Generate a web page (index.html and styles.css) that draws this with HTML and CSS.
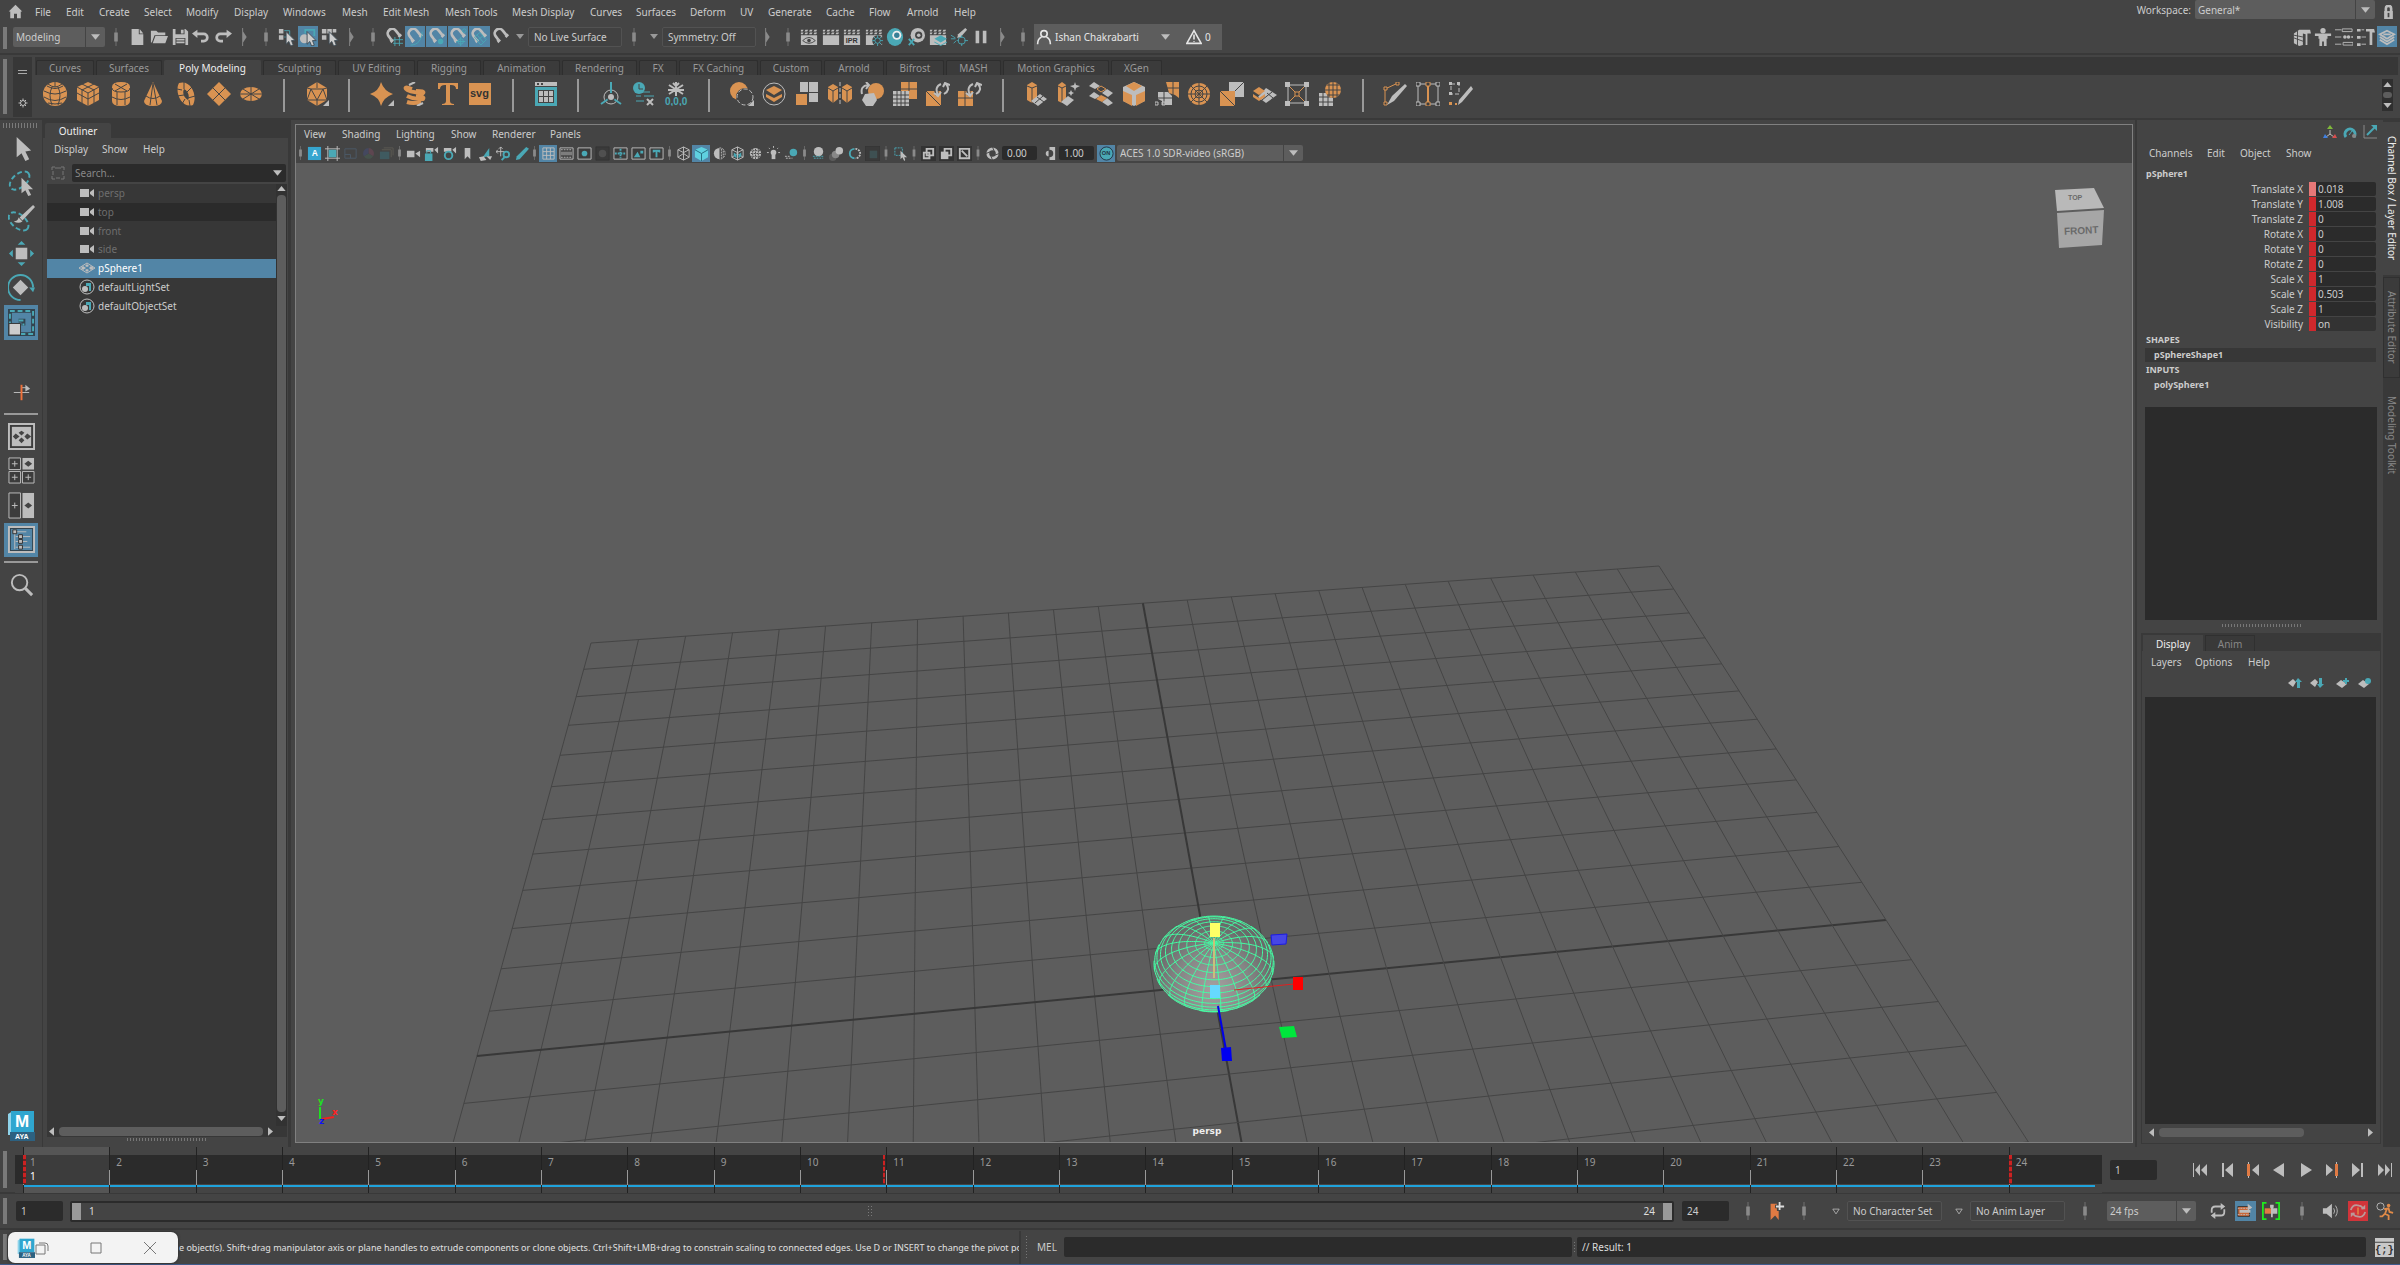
FILE: index.html
```html
<!DOCTYPE html>
<html lang="en">
<head>
<meta charset="utf-8">
<title>Maya</title>
<link rel="stylesheet" href="styles.css">
</head>
<body>
<svg class="sprite" aria-hidden="true">
<symbol id="home" viewBox="0 0 20 20"><path class="g" d="M10 1 1 10h2v9h5v-6h4v6h5v-9h2z"/></symbol>
<symbol id="down" viewBox="0 0 10 6"><path class="g" d="M0 0h10L5 6z"/></symbol>
<symbol id="downo" viewBox="0 0 10 8"><path class="s" d="M1 1h8L5 7z"/></symbol>
<symbol id="sep" viewBox="0 0 10 20"><path class="s m" d="M5 0v20"/><path class="m2" d="M3 5h4v10H3z"/></symbol>
<symbol id="grp" viewBox="0 0 10 20"><path class="m2" d="M3 0h1v4l4 6-4 6v4H3z"/></symbol>
<symbol id="file" viewBox="0 0 20 20"><path class="g" d="M4 1h8v6h5v12H4zM13 1l4 5h-4z"/></symbol>
<symbol id="open" viewBox="0 0 20 20"><path class="g" d="M1 3h6l2 2h8v3H5l-3 8H1zM6 9h14l-3 8H3z"/></symbol>
<symbol id="save" viewBox="0 0 20 20"><path class="g" d="M2 1h14l3 3v15H2z"/><path class="dk" d="M5 1h10v6H5zM5 11h11v8H5z"/><path class="g" d="M11 2h3v4h-3zM6 12h9v2H6zM6 15h9v2H6z"/></symbol>
<symbol id="undo" viewBox="0 0 20 20"><path class="g" d="M6 2v3h7a5 5 0 0 1 0 11h-3v-3h3a2 2 0 0 0 0-5H6v3L0 6z"/></symbol>
<symbol id="redo" viewBox="0 0 20 20"><path class="g" d="M14 2v3H7a5 5 0 0 0 0 11h3v-3H7a2 2 0 0 1 0-5h7v3l6-5z"/></symbol>
<symbol id="ptr" viewBox="0 0 20 20"><path fill="#ccc" stroke="#3c4a52" d="M9 4v14l3-3 2 5 3-1-2-5h4z"/></symbol>
<symbol id="selh" viewBox="0 0 20 20"><path class="g" d="M1 1h5v5H1zM1 8h5v5H1z"/><path class="st" d="M7 3h6v9M7 10h4"/><use href="#ptr"/></symbol>
<symbol id="selo" viewBox="0 0 20 20"><circle class="g" cx="6" cy="12" r="5"/><path class="st w2" d="M7 6V2h10v7"/><use href="#ptr"/></symbol>
<symbol id="selc" viewBox="0 0 20 20"><path class="g" d="M1 1h5v5H1zM7 1h5v5H7zM1 8h5v5H1zM13 1h4v4h-4z"/><use href="#ptr"/></symbol>
<symbol id="mag" viewBox="0 0 20 20"><path class="gm" d="M7 13 4 9a5 5 0 0 1 8-6l4 5"/><path class="g" d="m5 14 3-2 2 2-3 3zM14 9l3-3 2 2-3 3z"/></symbol>
<symbol id="maggrid" viewBox="0 0 20 20"><use href="#mag"/><path class="st" d="M11 10v10M16 10v10M9 13h11M9 17h11"/></symbol>
<symbol id="magcrv" viewBox="0 0 20 20"><use href="#mag"/><path class="st" d="M5 19c8 0 13-6 13-15"/></symbol>
<symbol id="magpt" viewBox="0 0 20 20"><use href="#mag"/><circle class="t" cx="14" cy="15" r="3"/></symbol>
<symbol id="magprj" viewBox="0 0 20 20"><use href="#mag"/><circle class="st" cx="13" cy="15" r="3"/><circle class="st" cx="17" cy="3" r="2"/><path class="st" d="M13 10v10M8 15h10"/></symbol>
<symbol id="magpln" viewBox="0 0 20 20"><use href="#mag"/><path class="st" d="m5 10 6-5 7 8-6 6zM8 14l6-5M8 8l7 8"/></symbol>
<symbol id="clap" viewBox="0 0 20 20"><path class="g" d="M1 2h3L3 4H1zM6 2h3L8 4H5zM11 2h3l-1 2h-3zM16 2h3l-1 2h-3zM1 5h3L3 7H1zM6 5h3L8 7H5zM11 5h3l-1 2h-3zM16 5h3l-1 2h-3zM1 8h18v11H1z"/></symbol>
<symbol id="clapeye" viewBox="0 0 20 20"><use href="#clap"/><path class="ds" d="M3 14q7-7 14 0q-7 6-14 0z"/><circle class="dk" cx="10" cy="14" r="2"/></symbol>
<symbol id="clapipr" viewBox="0 0 20 20"><use href="#clap"/><text class="ipr" x="3" y="17">IPR</text></symbol>
<symbol id="cog" viewBox="0 0 20 20"><circle class="s2" cx="10" cy="10" r="5"/><path class="s2" d="M10 1v4M10 15v4M1 10h4M15 10h4M4 4l3 3M13 13l3 3M16 4l-3 3M7 13l-3 3"/></symbol>
<symbol id="clapcog" viewBox="0 0 20 20"><use href="#clap"/><circle class="dk" cx="14" cy="14" r="6"/><circle class="st" cx="14" cy="14" r="3"/><path class="st" d="M14 8v3M14 17v3M8 14h3M17 14h3M10 10l2 2M16 16l2 2M18 10l-2 2M12 16l-2 2"/></symbol>
<symbol id="eye" viewBox="0 0 20 20"><ellipse class="t" cx="10" cy="10" rx="9" ry="10"/><circle cx="12" cy="8" r="5" fill="#eee"/><circle cx="12" cy="8" r="3" fill="#387f96"/></symbol>
<symbol id="eyex" viewBox="0 0 20 20"><circle class="g" cx="12" cy="8" r="8"/><circle class="dk" cx="13" cy="8" r="4"/><circle class="g" cx="13" cy="8" r="2"/><path class="st w2" d="m2 12 6 7M8 12l-6 7"/></symbol>
<symbol id="claplay" viewBox="0 0 20 20"><use href="#clap"/><path class="t" d="m13 8 7 4-7 4-7-4zM6 15l7 4 7-4v1l-7 4-7-4z"/></symbol>
<symbol id="light" viewBox="0 0 20 20"><path class="g" d="m17 0 2 2-7 8-4 1 1-4z"/><path class="st" d="M1 8l5 3M4 17l3-3M1 12h5"/><circle class="st" cx="13" cy="14" r="4"/><path class="st" d="M13 8v3M13 17v3M8 14h2M16 14h4"/></symbol>
<symbol id="pause" viewBox="0 0 20 20"><path class="g" d="M4 3h4v14H4zM12 3h4v14h-4z"/></symbol>
<symbol id="user" viewBox="0 0 20 20"><circle class="sw" cx="10" cy="6" r="4"/><path class="sw" d="M2 19q0-7 5-9M18 19q0-7-5-9"/></symbol>
<symbol id="warn" viewBox="0 0 20 20"><path class="sw" d="M10 2 1 18h18zM10 7v6M10 15v1"/></symbol>
<symbol id="psphere" viewBox="0 0 24 24"><circle class="o" cx="12" cy="12" r="12"/><path class="ds" d="M1 9q11 6 22 0M1 15q11 7 22 0M4 4q8 5 16 0M5 21q7 2 14 0M12 0v5M9 5q-4 8 0 18M15 5q4 8 0 18M5 2q4 3 7 3t7-3"/></symbol>
<symbol id="pcube" viewBox="0 0 24 24"><path class="o" d="m12 0 11 5v13l-11 6-11-6V5z"/><path class="ds" d="m1 5 11 6 11-6M12 11v13M6 2l12 6v13M18 2 6 8v13M1 11l11 6 11-6"/></symbol>
<symbol id="pcyl" viewBox="0 0 24 24"><path class="o" d="M3 5q0-5 9-5t9 5v14q0 5-9 5t-9-5z"/><path class="ds" d="M3 6q0 4 9 4t9-4M3 15q9 5 18 0M8 10v13M16 10v13M6 2l12 7M18 2 6 9"/></symbol>
<symbol id="pcone" viewBox="0 0 24 24"><path class="o" d="m12 0 9 19q0 5-9 5t-9-5z"/><path class="ds" d="M5 14q7 5 14 0M12 1 9 23M12 1l4 22"/></symbol>
<symbol id="ptorus" viewBox="0 0 24 24"><path class="o" fill-rule="evenodd" d="M5 1C17-3 24 14 19 23 8 27 0 10 5 1zM10 7c-2 4 0 9 4 11 2-4 0-9-4-11z"/><path class="ds" d="m3 7 5 1M3 14l7-1M10 0v7M18 5l-5 5M21 14l-7 2M8 22l3-5M15 18l1 6"/></symbol>
<symbol id="pplane" viewBox="0 0 24 24"><path class="o" d="m12 0 12 12-12 12L0 12z"/><path class="ds" d="M6 6l12 12M18 6 6 18"/></symbol>
<symbol id="pdisc" viewBox="0 0 24 24"><ellipse class="o" cx="12" cy="12" rx="11" ry="7"/><path class="ds" d="M1 12h22M12 5v14M4 7l16 10M20 7 4 17"/></symbol>
<symbol id="corner" viewBox="0 0 24 24"><path class="g" d="M24 18v6h-6z"/></symbol>
<symbol id="plat" viewBox="0 0 24 24"><path class="o" d="m12 0 10 6v12l-10 6-10-6V6z"/><path class="ds" d="M12 0v6M6 7h12l-6 11zM2 6l4 1-4 11 10 0v6M22 6l-4 1 4 11H12"/><use href="#corner"/></symbol>
<symbol id="pstar" viewBox="0 0 24 24"><path class="o" d="M11 0q3 9 12 12-9 3-12 12Q9 15 0 12 9 9 11 0z"/><use href="#corner"/></symbol>
<symbol id="pheli" viewBox="0 0 24 24"><path class="so w4" d="M9 7Q1 4 3 7t17 4q2-2-7-2M4 14q8 4 16 3 2-3-7-3M4 20q6 2 14 0"/><path class="s w2" d="m6 3 6-3M14 24l6-3"/></symbol>
<symbol id="ptext" viewBox="0 0 24 24"><path class="o" d="M2 1h20v6h-2q0-4-5-4h-1v16q0 3 4 3v1H6v-1q4 0 4-3V3H9Q4 3 4 7H2z"/></symbol>
<symbol id="psvg" viewBox="0 0 24 24"><path class="o" d="M1 1h22v22H1z"/><text class="svgt" x="2" y="15">svg</text></symbol>
<symbol id="content" viewBox="0 0 24 24"><path class="g" d="M1 0h22v4H1z"/><path class="t" d="M1 5h22v19H1z"/><path class="dk" d="M3 1h2v2H3zM7 1h2v2H7zM4 8h16v13H4z"/><path class="g" d="M5 9h4v5H5zM10 9h4v5h-4zM15 9h4v5h-4zM5 15h4v5H5zM10 15h4v5h-4zM15 15h4v5h-4z"/></symbol>
<symbol id="pivot" viewBox="0 0 24 24"><circle class="s" cx="12" cy="15" r="7"/><path class="st w2" d="M12 0v12M12 15l-10 7M12 15l10 7"/><circle class="dk" cx="12" cy="15" r="4"/><circle class="g" cx="12" cy="15" r="3"/></symbol>
<symbol id="hist" viewBox="0 0 24 24"><circle class="t" cx="7" cy="6" r="6"/><path class="ds" d="M7 2v5h4"/><path class="st" d="M12 14h10M4 19h8M9 10h9M4 14h5"/><path class="s w2" d="m15 17 6 6M21 17l-6 6"/></symbol>
<symbol id="freeze" viewBox="0 0 24 24"><path class="s w2" d="M12 0v14M5 3l14 9M19 3 5 12M9 1l3 3 3-3M4 8h16"/><text class="zero" x="1" y="23">0,0,0</text></symbol>
<symbol id="comb" viewBox="0 0 24 24"><circle class="o" cx="9" cy="9" r="9"/><circle class="dk" cx="15" cy="15" r="9"/><circle class="s dash" cx="15" cy="15" r="8"/><use href="#corner"/></symbol>
<symbol id="sepr" viewBox="0 0 24 24"><circle class="s" cx="12" cy="12" r="11"/><path class="o" d="m12 4 8 4-8 5-8-5zM4 12l8 4 8-4v3l-8 5-8-5z"/></symbol>
<symbol id="extr" viewBox="0 0 24 24"><path class="g" d="M5 0h8v10H5zM14 0h9v10h-9zM14 11h9v9h-9z"/><path class="o" d="M1 12h11v11H1z"/></symbol>
<symbol id="mirr" viewBox="0 0 24 24"><path class="o" d="m5 2 5 3v12l-5 4-5-4V5zM19 2l5 3v12l-5 4-5-4V5z"/><path class="s dash" d="M12 0v24"/><path class="ds" d="m0 6 5 3 5-3M5 9v12M14 6l5 3 5-3M19 9v12"/></symbol>
<symbol id="smth" viewBox="0 0 24 24"><circle class="o" cx="16" cy="9" r="8"/><path class="g" d="m5 12 9-1 3 7-4 6H6l-4-6z"/><path class="s w2" d="M2 12Q0 4 8 3M6 0l3 3-3 4"/></symbol>
<symbol id="remesh" viewBox="0 0 24 24"><path class="o" d="M8 0h16v17H8z"/><path class="g" d="M0 9h16v15H0z"/><path class="ds" d="M0 13h16M0 17h16M0 21h16M4 9v15M8 9v15M12 9v15M16 0v9M8 7h16"/></symbol>
<symbol id="retr" viewBox="0 0 24 24"><path class="o" d="M0 9h15v15H0z"/><path class="ds" d="m0 9 15 15"/><path class="dkw" d="M14 4q-5 2-3 9M20 2q5 5-1 10"/><path class="s w2" d="M15 2q-7 3-3 11M8 11l4 3 3-4M18 12q7-4 2-10M17 5l2-4 5 2"/></symbol>
<symbol id="reto" viewBox="0 0 24 24"><path class="o" d="M0 9h15v15H0z"/><path class="ds" d="M7 9v15M0 16h15"/><path class="dkw" d="M14 4q-5 2-3 9M20 2q5 5-1 10"/><path class="s w2" d="M15 2q-7 3-3 11M8 11l4 3 3-4M18 12q7-4 2-10M17 5l2-4 5 2"/></symbol>
<symbol id="ex2" viewBox="0 0 24 24"><path class="o" d="m8 0 5 3v15l-5 3-5-3V3z"/><path class="ds" d="m3 4 5 2 5-2M8 6v15"/><path class="g" d="m16 12 7 5-9 7-7-5z"/><path class="ds" d="m13 15 7 5M19 14l-8 7"/></symbol>
<symbol id="ex3" viewBox="0 0 24 24"><path class="o" d="m6 0 4 3v16l-4 2-4-2V3z"/><path class="ds" d="m2 4 4 2 4-2M6 6v15"/><path class="g" d="m12 14 6 4-7 6-6-4zM19 0l1 3 4 1-4 2-1 3-1-3-4-2 4-1zM15 8l1 2 2 1-2 1-1 2-1-2-2-1 2-1z"/></symbol>
<symbol id="bridge" viewBox="0 0 24 24"><path class="g" d="m5 0 6 4-5 3-6-3zM18 7l6 4-5 4-6-4zM5 10l6 4-5 3-6-3zM18 16l6 5-5 3-6-4z"/><path class="o" d="m12 13 6 3-5 4-6-3z"/><path class="so" d="m12 4 5 3-5 3-4-3z"/></symbol>
<symbol id="bevel" viewBox="0 0 24 24"><path class="g" d="m12 0 11 5v14l-11 5-11-5V5z"/><path class="o" d="m12 0 8 4-8 5-8-5zM1 9l9 4v11l-9-5zM23 9l-9 4v11l9-5z"/></symbol>
<symbol id="quad" viewBox="0 0 24 24"><path class="o" d="M11 0h13v16l-4-3-6-2z"/><path class="g" d="M3 10h10l4 4v9H7v-4l-4-2z"/><path class="ds" d="M18 0v13M11 6h13M9 10v13M3 16h14"/><path class="s" d="M0 20h3v3H0zM7 20h3v3H7z"/></symbol>
<symbol id="circ" viewBox="0 0 24 24"><circle class="o" cx="12" cy="12" r="11"/><circle class="ds" cx="12" cy="12" r="8"/><circle class="ds" cx="12" cy="12" r="4"/><path class="ds" d="M12 1v22M1 12h22M4 4l16 16M20 4 4 20"/></symbol>
<symbol id="dup" viewBox="0 0 24 24"><path class="g" d="M9 0h15v15H9z"/><path class="ds" d="M24 0 9 15"/><path class="o" d="M0 9h15v15H0z"/><path class="ds" d="m0 9 15 15"/></symbol>
<symbol id="lay" viewBox="0 0 24 24"><path class="g" d="m13 6 11 7-11 8-8-6z"/><path class="o" d="m6 5 6 4-6 4-6-4zM0 12l6 4 6-4v3l-6 4-6-4z"/><path class="ds" d="m9 18 10-8M14 11l6 5"/></symbol>
<symbol id="cage" viewBox="0 0 24 24"><path class="s" d="M3 3h18v18H3z"/><path class="so" d="m5 5 14 14M19 5 5 19"/><path class="g" d="M0 0h5v5H0zM19 0h5v5h-5zM0 19h5v5H0zM19 19h5v5h-5z"/><path class="so dkf" d="M10 10h4v4h-4z"/></symbol>
<symbol id="bool" viewBox="0 0 24 24"><path class="g" d="M1 11h14v13H1z"/><path class="ds" d="M5 11v13M10 11v13M1 15h14M1 20h14"/><circle class="o" cx="15" cy="8" r="8"/><path class="ds" d="M15 0v16M7 8h16M9 3h12M9 13h12M11 1v14M19 1v14"/></symbol>
<symbol id="knife" viewBox="0 0 24 24"><path class="so" d="M2 22V7l13-6"/><path class="so dkf" d="M1 5h3v3H1zM13 0h3v3h-3zM1 20h3v3H1z"/><path class="g" d="m22 2 2 2L11 19l-7 4 5-9z"/></symbol>
<symbol id="loopt" viewBox="0 0 24 24"><path class="s" d="M2 2h20v20H2z"/><path class="s dkf" d="M0 0h4v4H0zM20 0h4v4h-4zM0 20h4v4H0zM20 20h4v4h-4z"/><path class="so w2" d="M12 3v18"/><path class="so dkf" d="M10 0h4v4h-4zM10 20h4v4h-4z"/></symbol>
<symbol id="qdraw" viewBox="0 0 24 24"><path class="s dash" d="M2 2h8v10H2z"/><path class="g" d="m22 4 2 3-11 13-4 3 1-5zM0 0h3v3H0zM8 0h3v3H8zM0 10h3v3H0z"/><path class="o" d="M0 20h3v3H0zM6 21h2v2H6z"/></symbol>
<symbol id="lock" viewBox="0 0 12 16"><path class="gm" d="M3 8V4q0-3 3-3t3 3v4"/><path class="g" d="M1 7h10v9H1z"/><path class="dk" d="M5 9h2v5H5z"/></symbol>
<symbol id="w1" viewBox="0 0 20 20"><path class="g" d="m1 6 6-4h12l1 4h-4v13h-2V7l-3-1v13l-4 1-6-3z"/><path class="ds" d="M1 11l11 4M5 3v17M1 8l10 2"/></symbol>
<symbol id="w2" viewBox="0 0 20 20"><circle class="g" cx="10" cy="3" r="3"/><path class="g" d="M1 6h18v3h-4v3h-1v8h-3v-5H9v5H6v-8H5V9H1z"/></symbol>
<symbol id="w3" viewBox="0 0 20 20"><path class="s" d="M0 2h7M0 10h7M0 18h7M8 1h11v3H8zM9 16h11v3H9z"/><circle class="g" cx="11" cy="10" r="2"/><circle class="g" cx="15" cy="10" r="2"/><circle class="g" cx="19" cy="10" r="1"/></symbol>
<symbol id="w4" viewBox="0 0 20 20"><path class="g" d="M0 1h4v3H0zM0 9h4v3H0zM0 17h4v3H0zM10 1h9l1 4h-3v14h-3V4h-4z"/><path class="s" d="M5 2h3M5 10h5M5 18h5"/></symbol>
<symbol id="w5" viewBox="0 0 20 20"><path class="s w2" d="m10 3 8 4-8 5-8-5zM2 10l8 5 8-5M2 13l8 5 8-5M6 7h8"/></symbol>
<symbol id="arrow" viewBox="0 0 28 28"><path class="g" d="M9 1v21l5-4 4 8 4-2-4-8 6-1z"/></symbol>
<symbol id="lasso" viewBox="0 0 28 28"><ellipse class="st w2 dash4" cx="12" cy="11" rx="12" ry="7" transform="rotate(-40 12 11)"/><path class="g" d="M14 8v16l4-3 3 6 3-1-3-6h5z"/></symbol>
<symbol id="paint" viewBox="0 0 28 28"><ellipse class="st w2 dash4" cx="11" cy="17" rx="12" ry="7" transform="rotate(40 11 17)"/><path class="g" d="m26 0 2 2-13 14-3-3zM11 13l4 4q-4 3-9 0 4 0 5-4z"/></symbol>
<symbol id="move" viewBox="0 0 28 28"><path class="g" d="M8 8h12v12H8z"/><path class="t" d="m14 1 4 4h-8zM14 27l4-4h-8zM1 14l4-4v8zM27 14l-4-4v8z"/></symbol>
<symbol id="rot" viewBox="0 0 28 28"><path class="g" d="m13 6 8 8-8 8-8-8z"/><path class="st w2" d="M13 27A13 13 0 1 1 26 14"/><path class="t" d="M22 14h6l-2 5z"/></symbol>
<symbol id="scale" viewBox="0 0 28 28"><path class="dk3" d="M2 2h24v24H2zM11 12h5v5"/><path class="st w2 dash4" d="M2 2h24v24H2zM11 12h5v5"/><path fill="#ccc" stroke="#333" d="M1 15h12v12H1z"/></symbol>
<symbol id="piv2" viewBox="0 0 28 28"><path class="s" d="M6 14h16M14 9h6"/><path class="g" d="m18 6 5 4-5 3z"/><path d="M13 6h2v16h-2z" fill="#f0713a"/></symbol>
<symbol id="lo1" viewBox="0 0 28 28"><path class="s w2 dkf" d="M1 1h26v26H1z"/><path class="g" d="M4 4h20v20H4z"/><path class="dk" d="m14 8 3 2-3 3-3-3zM8 11l4 3-4 3-3-3zM20 11l4 3-4 3-3-3zM14 15l3 3-3 3-3-3z"/></symbol>
<symbol id="lo2" viewBox="0 0 28 28"><path class="s dkf" d="M1 1h12v12H1zM1 15h12v12H1zM15 15h12v12H15zM4 7h6M7 4v6M4 21h6M7 18v6M18 21h6M21 18v6"/><path class="g" d="M15 1h12v12H15z"/><path class="dk" d="m21 4 4 3-4 3-4-3z"/></symbol>
<symbol id="lo3" viewBox="0 0 28 28"><path class="s dkf" d="M1 1h12v26H1zM4 14h6M7 11v6"/><path class="g" d="M15 1h12v26H15z"/><path class="dk" d="m21 11 4 3-4 3-4-3z"/></symbol>
<symbol id="lo4" viewBox="0 0 28 28"><path class="dk3" d="M1 1h26v26H1z"/><path class="s w2" d="M1 1h26v26H1z"/><path class="s" d="M7 5v19M7 6h12M8 11h15M8 16h12M8 22h15"/><path class="g" stroke="#333" d="M5 4h4v4H5zM11 9h4v4h-4zM11 14h4v4h-4zM11 20h4v4h-4z"/></symbol>
<symbol id="find" viewBox="0 0 28 28"><circle class="s w2" cx="12" cy="12" r="8"/><path class="gm" d="m18 18 7 7"/></symbol>
<symbol id="maya" viewBox="0 0 28 31"><path fill="#8fd3ea" d="m1 4 5-3v24H1z"/><path fill="#2fa6cf" d="M4 1h23v21H4z"/><path fill="#2d6180" d="M3 22h25v9H3z"/><text class="mm" x="8" y="17">M</text><text class="ma" x="8" y="29">AYA</text></symbol>
<symbol id="cam" viewBox="0 0 14 8"><path class="g" d="M0 0h9v8H0zM10 3l4-3v8l-4-3z"/></symbol>
<symbol id="mesh" viewBox="0 0 18 12"><path class="s" d="m9 1 8 5-8 5-8-5z"/><path class="g" d="m9 2 2 2-2 1-2-1zM5 4l3 2-3 2-2-2zM13 4l3 2-3 2-2-2zM9 7l2 1-2 2-2-2z"/></symbol>
<symbol id="set" viewBox="0 0 16 16"><circle class="s" cx="8" cy="8" r="7"/><circle class="g" cx="6" cy="10" r="3"/><path class="t" d="M7 4h5v8h-2V7H7z"/></symbol>
<symbol id="expand" viewBox="0 0 16 16"><path d="M2 5V2h3M11 2h3v3M14 11v3h-3M5 14H2v-3M5 3h6M3 6v4M13 6v4M6 13h4" fill="none" stroke="#777"/></symbol>
<symbol id="vA" viewBox="0 0 16 16"><path fill="#36a5cf" d="M1 1h14v14H1z"/><text class="va" x="5" y="11">A</text></symbol>
<symbol id="v1" viewBox="0 0 16 16"><path class="s" d="M3 0v16M13 0v16M0 3h16M0 13h16"/><path class="t" d="M4 4h8v8H4z"/></symbol>
<symbol id="v2" viewBox="0 0 16 16"><path fill="none" stroke="#4c5a68" d="M2 3h12v10H2zM2 9h6v4"/></symbol>
<symbol id="v3" viewBox="0 0 16 16"><path fill="#5d4650" d="M8 2a6 6 0 0 1 5 9L8 8z"/><path fill="#46524c" d="M13 11a6 6 0 0 1-10 0l5-3z"/><path fill="#44485f" d="M3 11a6 6 0 0 1 5-9v6z"/></symbol>
<symbol id="v4" viewBox="0 0 16 16"><path fill="none" stroke="#5c5a52" d="M5 2h10v8M3 4h10v8"/><path fill="#3f5a60" d="M1 6h10v8H1z"/></symbol>
<symbol id="v5" viewBox="0 0 16 16"><path class="g" d="M1 5h8v7H1zM10 8l5-3v7z"/></symbol>
<symbol id="v6" viewBox="0 0 16 16"><path class="g" d="M2 2h8v4H2zM11 4l4-3v7z"/><path class="t" d="M1 8h8v8H1z"/><path class="st" d="M3 8V5h4v3"/></symbol>
<symbol id="v7" viewBox="0 0 16 16"><path class="g" d="M2 2h8v4H2zM11 4l4-3v7z"/><circle class="st w2" cx="7" cy="10" r="4"/></symbol>
<symbol id="v8" viewBox="0 0 16 16"><path class="g" d="M5 2h6v12l-3-3-3 3z"/></symbol>
<symbol id="v9" viewBox="0 0 16 16"><path class="t" d="m5 12 7-10v9z"/><path class="g" d="m1 12 5-1 3 4-6 1zM9 11l6 0-2 4z"/></symbol>
<symbol id="v10" viewBox="0 0 16 16"><path class="s" d="M5 1v10M0 6h9M3 3l2-2 2 2M2 4 0 6l2 2"/><circle class="st w2" cx="11" cy="9" r="3"/><path class="st w2" d="m9 12-3 3"/></symbol>
<symbol id="v11" viewBox="0 0 16 16"><path class="t" d="m13 1 3 2L6 14l-4 1 1-4z"/></symbol>
<symbol id="vgrid" viewBox="0 0 16 16"><path class="s" stroke-width="1" d="M2 2h12v12H2zM6 2v12M10 2v12M2 6h12M2 10h12"/></symbol>
<symbol id="vf" viewBox="0 0 16 16"><path class="s dkf" d="M1 2h14v12H1z"/></symbol>
<symbol id="vfilm" viewBox="0 0 16 16"><use href="#vf"/><path fill="#7d7d7d" d="M2 6h12v4H2z"/><path class="s dash2" d="M2 4h12M2 12h12"/></symbol>
<symbol id="vdot" viewBox="0 0 16 16"><use href="#vf"/><circle class="t" cx="8" cy="8" r="3"/></symbol>
<symbol id="voff" viewBox="0 0 16 16"><path fill="#3a3a3a" stroke="#333" d="M1 1h14v14H1z"/><circle cx="8" cy="8" r="4" fill="#505050"/></symbol>
<symbol id="vcr" viewBox="0 0 16 16"><use href="#vf"/><path class="st w2 dash2" d="M8 3v10M2 8h12"/></symbol>
<symbol id="vimg" viewBox="0 0 16 16"><use href="#vf"/><path class="t" d="m3 12 4-6 3 6zM10 5h3v3h-3z"/></symbol>
<symbol id="vT" viewBox="0 0 16 16"><use href="#vf"/><path class="t" d="M4 4h8v3h-1L9 6v6H7V6L5 7H4z"/></symbol>
<symbol id="vwire" viewBox="0 0 16 16"><path class="s" d="m8 1 6 3v8l-6 3-6-3V4zM2 4l6 3 6-3M8 1v14M2 12l6-4 6 4"/></symbol>
<symbol id="vsol" viewBox="0 0 16 16"><path fill="#5fd0df" d="m8 1 7 3v8l-7 4-7-4V4z"/><path d="m1 4 7 4 7-4M8 8v8" fill="none" stroke="#256a7c"/></symbol>
<symbol id="vhalf" viewBox="0 0 16 16"><path class="g" d="M8 2a6 6 0 0 0 0 12z"/><path class="s dash2" d="M8 2a6 6 0 0 1 0 12M10 3v10M12 5v7"/></symbol>
<symbol id="vtex" viewBox="0 0 16 16"><use href="#vwire"/><path class="t" d="M4 7l3 2v4l-3-2zM9 9l3-2v4l-3 2z"/></symbol>
<symbol id="vchk" viewBox="0 0 16 16"><circle class="g" cx="8" cy="8" r="6"/><path class="ds dash2" d="M2 5h12M3 8h12M2 11h12M5 2v12M8 3v12M11 2v12"/></symbol>
<symbol id="vbulb" viewBox="0 0 16 16"><circle class="g" cx="8" cy="7" r="3"/><path class="g" d="M6 9h4v5H6z"/><path class="s" d="M8 0v2M1 7h2M13 7h2M3 2l1 1M13 2l-1 1"/></symbol>
<symbol id="vshad" viewBox="0 0 16 16"><circle class="t" cx="10" cy="7" r="4"/><path class="s dash2" d="M1 11h6M2 13h7"/></symbol>
<symbol id="vao" viewBox="0 0 16 16"><circle class="g" cx="8" cy="6" r="5"/><path class="st dash2" d="M2 11h12M3 13h10"/></symbol>
<symbol id="vblur" viewBox="0 0 16 16"><circle cx="4" cy="12" r="4" fill="#5c5c5c"/><circle cx="7" cy="9" r="4" fill="#888"/><circle class="g" cx="11" cy="5" r="4"/></symbol>
<symbol id="vaa" viewBox="0 0 16 16"><path class="st w2" d="M8 3a5 5 0 0 0 0 10"/><path class="s w2 dash2" d="M9 3a5 5 0 0 1 0 10"/></symbol>
<symbol id="vdof" viewBox="0 0 16 16"><path fill="#3a3a3a" stroke="#333" d="M0 0h16v16H0z"/><path fill="#3e5052" d="M5 5h8v8H5z"/></symbol>
<symbol id="viso" viewBox="0 0 16 16"><path class="st dash2" d="M2 2h8v8H2z"/><path class="g" d="M8 5v9l2-2 2 4 1-1-1-3h3z"/></symbol>
<symbol id="vx1" viewBox="0 0 16 16"><path fill="#333" d="M0 0h16v16H0z"/><path class="gm2" d="M6 3h7v7H6zM3 7h6v6H3z"/></symbol>
<symbol id="vx2" viewBox="0 0 16 16"><path fill="#333" d="M0 0h16v16H0z"/><path class="gm2" d="M6 3h7v7H6z"/><path class="g" d="M2 6h8v8H2z"/></symbol>
<symbol id="vx3" viewBox="0 0 16 16"><path fill="#333" d="M0 0h16v16H0z"/><path class="gm2" d="M3 3h10v10H3zM5 5l6 6"/></symbol>
<symbol id="vap" viewBox="0 0 16 16"><circle class="gm" cx="8" cy="8" r="5"/><path class="ds" d="M8 1l2 5M15 8l-5 2M8 15l-2-5M1 8l5-2"/></symbol>
<symbol id="vgam" viewBox="0 0 16 16"><path class="g" d="M8 1h6v14H8v-3a4 4 0 0 0 0-8zM7 5v6a3 3 0 0 1 0-6z"/></symbol>
<symbol id="von" viewBox="0 0 16 16"><circle cx="8" cy="8" r="7" fill="#4aa8b5" stroke="#234"/><text class="ont" x="3" y="10">ON</text></symbol>
<symbol id="c1" viewBox="0 0 14 14"><path class="s" d="M7 5v4l-4 3M7 9l4 3"/><path d="m7 0 3 4H4z" fill="#7fb83b"/><path d="m0 13 2-4 3 4z" fill="#3f7fe0"/><path d="m14 13-2-4-3 4z" fill="#d84d4d"/></symbol>
<symbol id="c2" viewBox="0 0 14 14"><path d="M3 12a5 5 0 1 1 8 0" fill="none" stroke="#4aa8b5" stroke-width="3"/><path class="st" d="m6 10 3-4"/><circle cx="11" cy="11" r="2" fill="#888"/></symbol>
<symbol id="c3" viewBox="0 0 14 14"><path fill="none" stroke="#888" d="M1 0v13h13"/><path class="st w2" d="m4 10 8-8"/><path class="t" d="M8 0h6v6z"/></symbol>
<symbol id="l1" viewBox="0 0 14 10"><path class="g" d="m5 1 3 3-3 5-5-4z"/><path class="t" d="m10 0 4 4h-2v6H9V4H7z"/></symbol>
<symbol id="l2" viewBox="0 0 14 10"><path class="g" d="m5 1 3 3-3 5-5-4z"/><path class="t" d="m10 10 4-4h-2V0H9v6H7z"/></symbol>
<symbol id="l3" viewBox="0 0 14 10"><path class="g" d="m5 2 6 4-5 4-6-4z"/><path class="st w2" d="M10 0v6M7 3h6"/></symbol>
<symbol id="l4" viewBox="0 0 14 10"><path class="g" d="m5 2 6 4-5 4-6-4z"/><circle class="t" cx="10" cy="3" r="3"/></symbol>
<symbol id="p1" viewBox="0 0 16 16"><path class="g" d="M1 1h1v14H1zM8 2v12L3 8zM15 2v12l-6-6z"/></symbol>
<symbol id="p2" viewBox="0 0 16 16"><path class="g" d="M3 1h2v14H3zM14 1v14L6 8z"/></symbol>
<symbol id="p3" viewBox="0 0 16 16"><path class="o2" d="M2 2h3v12H2z"/><path class="g" d="M3 0h1v2H3zM3 14h1v2H3zM14 2v12L7 8z"/></symbol>
<symbol id="p4" viewBox="0 0 16 16"><path class="g" d="M13 1v14L2 8z"/></symbol>
<symbol id="bm" viewBox="0 0 20 20"><path class="o2" d="M4 2h9v18l-4-5-5 5z"/><path stroke="#444" stroke-width="4" d="M13 0v10M9 5h9"/><path class="s w2 wh" d="M14 0v9M10 5h9"/></symbol>
<symbol id="loop" viewBox="0 0 20 20"><path class="s w2" d="M3 12V9q0-4 4-4h8M17 8v3q0 4-4 4H5"/><path class="g" d="m13 1 5 4-5 4zM7 11l-5 4 5 4z"/></symbol>
<symbol id="cache" viewBox="0 0 20 20"><path d="M2 5h13v11H2z" fill="#c9683a" stroke="#333"/><path class="s dash2" d="M2 7h13M2 14h13"/><path class="g" d="M4 9h12v3H4zM13 2l5 4-5 4z"/></symbol>
<symbol id="bake" viewBox="0 0 20 20"><path d="M5 1H1v18h4M15 1h4v18h-4" fill="none" stroke="#1eea1e" stroke-width="2"/><path class="o2" d="M3 7h8v6H3z"/><path class="g" d="M12 7h5v6h-5zM9 3h4v3l-1 1v10h-2V7L9 6z"/></symbol>
<symbol id="spk" viewBox="0 0 20 20"><path class="g" d="M1 7h4l6-5v16l-6-5H1z"/><path class="s" d="M13 7q2 3 0 6M15 4q4 6 0 12"/></symbol>
<symbol id="auto" viewBox="0 0 20 20"><path d="M2 9q2-7 9-5 3 0 5 4M18 11q-2 7-9 5-3 0-5-4" fill="none" stroke="#b99" stroke-width="2"/><path d="M13 8h5V3zM7 12H2v5z" fill="#b99"/><path d="M10 6v8" stroke="#e07a43" stroke-width="2"/></symbol>
<symbol id="run" viewBox="0 0 20 20"><circle class="s" cx="5" cy="5" r="4"/><circle cx="14" cy="4" r="2" fill="#e08a48"/><path d="m9 8 5-1 1 4 4 1M12 8l-2 5 4 2v5M10 13l-3 3H4" fill="none" stroke="#e08a48" stroke-width="2"/></symbol>
<symbol id="script" viewBox="0 0 20 20"><path fill="#c8c8c8" d="M0 0h20v4H0zM0 5h20v15H0z"/><text class="scr" x="0" y="16">{;}</text></symbol>
</svg>

<div class="app">
<header class="menubar">
  <a class="home" href="#" aria-label="Home"><svg><use href="#home"/></svg></a>
  <nav class="menus"><a href="#">File</a><a href="#">Edit</a><a href="#">Create</a><a href="#">Select</a><a href="#">Modify</a><a href="#">Display</a><a href="#">Windows</a><a href="#">Mesh</a><a href="#">Edit Mesh</a><a href="#">Mesh Tools</a><a href="#">Mesh Display</a><a href="#">Curves</a><a href="#">Surfaces</a><a href="#">Deform</a><a href="#">UV</a><a href="#">Generate</a><a href="#">Cache</a><a href="#">Flow</a><a href="#">Arnold</a><a href="#">Help</a></nav>
  <label class="ws-label" for="ws">Workspace:</label>
  <div class="combo ws"><select id="ws"><option>General*</option></select><svg><use href="#down"/></svg></div>
  <button class="lock" aria-label="Lock workspace"><svg><use href="#lock"/></svg></button>
</header>

<div class="status bar">
  <div class="combo mode"><select aria-label="Menu set"><option>Modeling</option></select><svg><use href="#down"/></svg></div>
  <div class="slots s19">
    <svg><use href="#sep"/></svg>
    <button aria-label="New"><svg><use href="#file"/></svg></button><button aria-label="Open"><svg><use href="#open"/></svg></button><button aria-label="Save"><svg><use href="#save"/></svg></button><button aria-label="Undo"><svg><use href="#undo"/></svg></button><button aria-label="Redo"><svg><use href="#redo"/></svg></button>
    <svg><use href="#grp"/></svg><svg><use href="#sep"/></svg>
    <button aria-label="Select hierarchy"><svg><use href="#selh"/></svg></button><button class="on" aria-label="Select object"><svg><use href="#selo"/></svg></button><button aria-label="Select component"><svg><use href="#selc"/></svg></button>
    <svg><use href="#grp"/></svg><svg><use href="#sep"/></svg>
    <button aria-label="Snap to grids"><svg><use href="#maggrid"/></svg></button><button class="on" aria-label="Snap to curves"><svg><use href="#magcrv"/></svg></button><button class="on" aria-label="Snap to points"><svg><use href="#magpt"/></svg></button><button class="on" aria-label="Snap to center"><svg><use href="#magprj"/></svg></button><button class="on" aria-label="Snap to planes"><svg><use href="#magpln"/></svg></button><button aria-label="Make live"><svg><use href="#mag"/></svg></button>
  </div>
  <svg class="tri"><use href="#down"/></svg>
  <button class="field">No Live Surface</button>
  <svg class="sp"><use href="#sep"/></svg><svg class="tri"><use href="#down"/></svg>
  <button class="field">Symmetry: Off</button>
  <div class="slots s13">
    <svg><use href="#grp"/></svg><svg><use href="#sep"/></svg>
    <button aria-label="Render view"><svg><use href="#clapeye"/></svg></button><button aria-label="Render frame"><svg><use href="#clap"/></svg></button><button aria-label="Render IPR"><svg><use href="#clapipr"/></svg></button><button aria-label="Render settings"><svg><use href="#clapcog"/></svg></button><button aria-label="Hypershade"><svg><use href="#eye"/></svg></button><button aria-label="Look dev"><svg><use href="#eyex"/></svg></button><button aria-label="Render setup"><svg><use href="#claplay"/></svg></button><button aria-label="Light editor"><svg><use href="#light"/></svg></button><button aria-label="Pause viewport"><svg><use href="#pause"/></svg></button>
    <svg><use href="#grp"/></svg><svg><use href="#sep"/></svg>
  </div>
  <button class="account"><svg class="i16"><use href="#user"/></svg><span class="name">Ishan Chakrabarti</span><svg class="t9"><use href="#down"/></svg><svg class="i16"><use href="#warn"/></svg><span>0</span></button>
  <div class="slots s5">
    <button aria-label="Modeling toolkit"><svg><use href="#w1"/></svg></button><button aria-label="Character controls"><svg><use href="#w2"/></svg></button><button aria-label="Attribute editor"><svg><use href="#w3"/></svg></button><button aria-label="Tool settings"><svg><use href="#w4"/></svg></button><button class="on" aria-label="Channel box"><svg><use href="#w5"/></svg></button>
  </div>
</div>

<div class="shelf bar">
  <div class="shelfside"><i class="burger"></i><svg><use href="#cog"/></svg></div>
  <div class="shelfmain">
    <div class="tabs"><button>Curves</button><button>Surfaces</button><button class="cur">Poly Modeling</button><button>Sculpting</button><button>UV Editing</button><button>Rigging</button><button>Animation</button><button>Rendering</button><button>FX</button><button>FX Caching</button><button>Custom</button><button>Arnold</button><button>Bifrost</button><button>MASH</button><button>Motion Graphics</button><button>XGen</button></div>
    <div class="icons">
      <button aria-label="Sphere"><svg><use href="#psphere"/></svg></button><button aria-label="Cube"><svg><use href="#pcube"/></svg></button><button aria-label="Cylinder"><svg><use href="#pcyl"/></svg></button><button aria-label="Cone"><svg><use href="#pcone"/></svg></button><button aria-label="Torus"><svg><use href="#ptorus"/></svg></button><button aria-label="Plane"><svg><use href="#pplane"/></svg></button><button aria-label="Disc"><svg><use href="#pdisc"/></svg></button><hr>
      <button aria-label="Platonic solid"><svg><use href="#plat"/></svg></button><hr>
      <button aria-label="Super shape"><svg><use href="#pstar"/></svg></button><button aria-label="Helix"><svg><use href="#pheli"/></svg></button><button aria-label="Type"><svg><use href="#ptext"/></svg></button><button aria-label="SVG"><svg><use href="#psvg"/></svg></button><hr>
      <button aria-label="Content browser"><svg><use href="#content"/></svg></button><hr>
      <button aria-label="Center pivot"><svg><use href="#pivot"/></svg></button><button aria-label="Delete history"><svg><use href="#hist"/></svg></button><button aria-label="Freeze transforms"><svg><use href="#freeze"/></svg></button><hr>
      <button aria-label="Combine"><svg><use href="#comb"/></svg></button><button aria-label="Separate"><svg><use href="#sepr"/></svg></button><button aria-label="Extract"><svg><use href="#extr"/></svg></button><button aria-label="Mirror"><svg><use href="#mirr"/></svg></button><button aria-label="Smooth"><svg><use href="#smth"/></svg></button><button aria-label="Remesh"><svg><use href="#remesh"/></svg></button><button aria-label="Retopologize"><svg><use href="#retr"/></svg></button><button aria-label="Reduce"><svg><use href="#reto"/></svg></button><hr>
      <button aria-label="Extrude"><svg><use href="#ex2"/></svg></button><button aria-label="Smart extrude"><svg><use href="#ex3"/></svg></button><button aria-label="Bridge"><svg><use href="#bridge"/></svg></button><button aria-label="Bevel"><svg><use href="#bevel"/></svg></button><button aria-label="Quadrangulate"><svg><use href="#quad"/></svg></button><button aria-label="Circularize"><svg><use href="#circ"/></svg></button><button aria-label="Duplicate"><svg><use href="#dup"/></svg></button><button aria-label="Merge"><svg><use href="#lay"/></svg></button><button aria-label="Lattice"><svg><use href="#cage"/></svg></button><button aria-label="Boolean"><svg><use href="#bool"/></svg></button><hr>
      <button aria-label="Multi-cut"><svg><use href="#knife"/></svg></button><button aria-label="Edge loop"><svg><use href="#loopt"/></svg></button><button aria-label="Quad draw"><svg><use href="#qdraw"/></svg></button>
    </div>
    <div class="shelfscroll"><svg class="up"><use href="#down"/></svg><i></i><svg><use href="#down"/></svg></div>
  </div>
</div>

<main class="main">
  <aside class="toolbox">
    <div class="tools t6"><button aria-label="Select"><svg><use href="#arrow"/></svg></button><button aria-label="Lasso"><svg><use href="#lasso"/></svg></button><button aria-label="Paint select"><svg><use href="#paint"/></svg></button><button aria-label="Move"><svg><use href="#move"/></svg></button><button aria-label="Rotate"><svg><use href="#rot"/></svg></button><button class="on" aria-label="Scale"><svg><use href="#scale"/></svg></button></div>
    <div class="tools t1"><button aria-label="Pivot"><svg><use href="#piv2"/></svg></button></div>
    <hr>
    <div class="tools t4"><button aria-label="Single view"><svg><use href="#lo1"/></svg></button><button aria-label="Four views"><svg><use href="#lo2"/></svg></button><button aria-label="Two views"><svg><use href="#lo3"/></svg></button><button class="on" aria-label="Outliner view"><svg><use href="#lo4"/></svg></button></div>
    <hr>
    <div class="tools"><button aria-label="Search"><svg><use href="#find"/></svg></button></div>
    <svg class="brand"><use href="#maya"/></svg>
  </aside>

  <section class="outliner">
    <div class="otab"><h2>Outliner</h2></div>
    <nav class="omenus"><a href="#">Display</a><a href="#">Show</a><a href="#">Help</a></nav>
    <div class="search"><svg class="i16"><use href="#expand"/></svg><label class="sbox"><input type="text" placeholder="Search..." aria-label="Search"><svg class="t9"><use href="#down"/></svg></label></div>
    <div class="otree">
      <ul class="list"><li class="dim"><svg><use href="#cam"/></svg>persp</li><li class="dim alt"><svg><use href="#cam"/></svg>top</li><li class="dim"><svg><use href="#cam"/></svg>front</li><li class="dim"><svg><use href="#cam"/></svg>side</li><li class="sel"><svg class="ms"><use href="#mesh"/></svg>pSphere1</li><li><svg class="st16"><use href="#set"/></svg>defaultLightSet</li><li><svg class="st16"><use href="#set"/></svg>defaultObjectSet</li></ul>
      <div class="vbar"><svg class="up"><use href="#down"/></svg><i></i><svg><use href="#down"/></svg></div>
    </div>
    <div class="hbar"><svg class="lt"><use href="#down"/></svg><i></i><svg class="rt"><use href="#down"/></svg></div>
    <div class="grip"></div>
  </section>

  <section class="view">
    <nav class="vmenus"><a href="#">View</a><a href="#">Shading</a><a href="#">Lighting</a><a href="#">Show</a><a href="#">Renderer</a><a href="#">Panels</a></nav>
    <div class="vtools">
      <svg class="vs"><use href="#sep"/></svg><button aria-label="Arnold"><svg><use href="#vA"/></svg></button><button aria-label="Region"><svg><use href="#v1"/></svg></button><button aria-label="Crop"><svg><use href="#v2"/></svg></button><button aria-label="Color"><svg><use href="#v3"/></svg></button><button aria-label="Snapshots"><svg><use href="#v4"/></svg></button>
      <svg class="vs"><use href="#sep"/></svg><button aria-label="Camera"><svg><use href="#v5"/></svg></button><button aria-label="Lock camera"><svg><use href="#v6"/></svg></button><button aria-label="Camera attributes"><svg><use href="#v7"/></svg></button><button aria-label="Bookmark"><svg><use href="#v8"/></svg></button><button aria-label="Image plane"><svg><use href="#v9"/></svg></button><button aria-label="Pan zoom"><svg><use href="#v10"/></svg></button><button aria-label="Grease pencil"><svg><use href="#v11"/></svg></button>
      <svg class="vs"><use href="#sep"/></svg><button class="on" aria-label="Grid"><svg><use href="#vgrid"/></svg></button><button aria-label="Film gate"><svg><use href="#vfilm"/></svg></button><button aria-label="Resolution gate"><svg><use href="#vdot"/></svg></button><button aria-label="Gate mask"><svg><use href="#voff"/></svg></button><button aria-label="Field chart"><svg><use href="#vcr"/></svg></button><button aria-label="Safe action"><svg><use href="#vimg"/></svg></button><button aria-label="Safe title"><svg><use href="#vT"/></svg></button>
      <svg class="vs"><use href="#sep"/></svg><button aria-label="Wireframe"><svg><use href="#vwire"/></svg></button><button class="on" aria-label="Shaded"><svg><use href="#vsol"/></svg></button><button aria-label="Default material"><svg><use href="#vhalf"/></svg></button><button aria-label="Wire on shaded"><svg><use href="#vtex"/></svg></button><button aria-label="Textured"><svg><use href="#vchk"/></svg></button><button aria-label="All lights"><svg><use href="#vbulb"/></svg></button><button aria-label="Shadows"><svg><use href="#vshad"/></svg></button>
      <svg class="vs"><use href="#sep"/></svg><button aria-label="Occlusion"><svg><use href="#vao"/></svg></button><button aria-label="Motion blur"><svg><use href="#vblur"/></svg></button><button aria-label="Anti-aliasing"><svg><use href="#vaa"/></svg></button><button aria-label="Depth of field"><svg><use href="#vdof"/></svg></button>
      <svg class="vs wd"><use href="#sep"/></svg><button aria-label="Isolate"><svg><use href="#viso"/></svg></button>
      <svg class="vs wd"><use href="#sep"/></svg><button aria-label="X-ray"><svg><use href="#vx1"/></svg></button><button aria-label="X-ray active"><svg><use href="#vx2"/></svg></button><button aria-label="X-ray joints"><svg><use href="#vx3"/></svg></button>
      <svg class="vs wd"><use href="#sep"/></svg><button aria-label="Exposure"><svg><use href="#vap"/></svg></button><input type="text" value="0.00" aria-label="Exposure value"><button aria-label="Gamma"><svg><use href="#vgam"/></svg></button><input type="text" value="1.00" aria-label="Gamma value"><button class="on" aria-label="Color management"><svg><use href="#von"/></svg></button>
      <div class="combo cs"><select aria-label="View transform"><option>ACES 1.0 SDR-video (sRGB)</option></select><svg><use href="#down"/></svg></div>
    </div>
    <div class="canvas"><svg id="scene" viewBox="296 163 1836 979" preserveAspectRatio="xMidYMid slice" role="img" aria-label="Perspective view">
      <defs><radialGradient id="shade" gradientUnits="userSpaceOnUse" cx="1213" cy="988" r="62"><stop offset="0" stop-color="#a59f9f"/><stop offset="0.6" stop-color="#858585"/><stop offset="1" stop-color="#6a6a6a"/></radialGradient></defs>
      <g id="grid"></g><g id="ball"></g>
      <g id="handles">
        <path d="M1214 938v40" stroke="#c9bf7a" stroke-width="2"/><path d="M1234 990l60-6" stroke="#e02020"/><path d="M1218 1006l8 44" stroke="#0000e8" stroke-width="2"/>
        <path d="M1210 923h10v14h-10z" fill="#ffff66"/><path d="M1210 985h10v13h-10z" fill="#66d9ff"/>
        <path d="M1293 977h10v13h-10z" fill="#f00"/><path d="m1221 1048 10-1 1 14h-10z" fill="#0000f0"/>
        <path d="m1279 1027 15-1 3 11-15 1z" fill="#00e63c"/><path d="m1271 935 16-1-1 10-14 1z" fill="#4646e6" stroke="#1c1ce0"/>
      </g>
      <g class="cube"><path d="m2055 190 39-2 10 20-47 3z" fill="#b9b9b9"/><path d="m2057 213 47-3-2 35-43 3z" fill="#a6a6a6"/><text x="2068" y="200" class="top">TOP</text><text x="2064" y="234" class="front" transform="rotate(-3 2080 230)">FRONT</text></g>
      <g class="axis"><path d="M320 1107v12" stroke="#1fe01f"/><path d="m322 1119 12-2" stroke="#e22"/><text x="318" y="1104" fill="#1fe01f">y</text><text x="332" y="1115" fill="#f22">x</text><text x="319" y="1124" fill="#11f">z</text></g>
      <text class="persp" x="1207" y="1134">persp</text>
    </svg></div>
  </section>

  <section class="channel">
    <div class="chicons"><svg><use href="#c1"/></svg><svg><use href="#c2"/></svg><svg><use href="#c3"/></svg></div>
    <nav class="chmenus"><a href="#">Channels</a><a href="#">Edit</a><a href="#">Object</a><a href="#">Show</a></nav>
    <h3>pSphere1</h3>
    <div class="attrs">
      <label for="tx">Translate X</label><i class="hot"></i><input id="tx" value="0.018">
      <label for="ty">Translate Y</label><i></i><input id="ty" value="1.008">
      <label for="tz">Translate Z</label><i></i><input id="tz" value="0">
      <label for="rx">Rotate X</label><i></i><input id="rx" value="0">
      <label for="ry">Rotate Y</label><i></i><input id="ry" value="0">
      <label for="rz">Rotate Z</label><i></i><input id="rz" value="0">
      <label for="sx">Scale X</label><i></i><input id="sx" value="1">
      <label for="sy">Scale Y</label><i></i><input id="sy" value="0.503">
      <label for="sz">Scale Z</label><i></i><input id="sz" value="1">
      <label for="vis">Visibility</label><i></i><input id="vis" class="vis" value="on">
    </div>
    <h3 class="row">SHAPES</h3><p class="node lit">pSphereShape1</p><h3 class="row">INPUTS</h3><p class="node">polySphere1</p>
    <div class="well w-a"></div>
    <div class="grip"></div>
    <div class="layers">
      <div class="ltabs"><button class="cur">Display</button><button>Anim</button></div>
      <nav class="lmenus"><a href="#">Layers</a><a href="#">Options</a><a href="#">Help</a></nav>
      <div class="licons"><svg><use href="#l1"/></svg><svg><use href="#l2"/></svg><svg class="gap"><use href="#l3"/></svg><svg><use href="#l4"/></svg></div>
      <div class="well w-b"></div>
      <div class="hbar lh"><svg class="lt"><use href="#down"/></svg><i></i><svg class="rt"><use href="#down"/></svg></div>
    </div>
  </section>
  <aside class="side"><button class="cur a">Channel Box / Layer Editor</button><button class="b">Attribute Editor</button><button class="c">Modeling Toolkit</button></aside>
</main>

<div class="timeline bar">
  <ol class="ticks"><li class="now key">1<b>1</b></li><li>2</li><li>3</li><li>4</li><li>5</li><li>6</li><li>7</li><li>8</li><li>9</li><li>10</li><li class="key pre">11</li><li>12</li><li>13</li><li>14</li><li>15</li><li>16</li><li>17</li><li>18</li><li>19</li><li>20</li><li>21</li><li>22</li><li>23</li><li class="key">24</li></ol>
  <input class="dark" value="1" aria-label="Current frame">
  <div class="play"><button aria-label="Go to start"><svg><use href="#p1"/></svg></button><button aria-label="Step back"><svg><use href="#p2"/></svg></button><button aria-label="Previous key"><svg><use href="#p3"/></svg></button><button aria-label="Play backwards"><svg><use href="#p4"/></svg></button><button aria-label="Play" class="flip"><svg><use href="#p4"/></svg></button><button aria-label="Next key" class="flip"><svg><use href="#p3"/></svg></button><button aria-label="Step forward" class="flip"><svg><use href="#p2"/></svg></button><button aria-label="Go to end" class="flip"><svg><use href="#p1"/></svg></button></div>
</div>

<div class="range bar">
  <input class="dark" value="1" aria-label="Start frame">
  <div class="rslider"><i></i><span>1</span><em></em><span>24</span><i></i></div>
  <input class="dark" value="24" aria-label="End frame">
  <svg class="rs"><use href="#sep"/></svg><button aria-label="Bookmark"><svg><use href="#bm"/></svg></button><svg class="rs"><use href="#sep"/></svg>
  <svg class="rt1"><use href="#downo"/></svg><button class="field rf">No Character Set</button>
  <svg class="rt2"><use href="#downo"/></svg><button class="field rf">No Anim Layer</button>
  <svg class="rs2"><use href="#sep"/></svg>
  <div class="combo fps"><select aria-label="Frame rate"><option>24 fps</option></select><svg><use href="#down"/></svg></div>
  <button class="lp" aria-label="Loop"><svg><use href="#loop"/></svg></button><button class="on" aria-label="Cached playback"><svg><use href="#cache"/></svg></button><button class="bk" aria-label="Evaluation"><svg><use href="#bake"/></svg></button>
  <svg class="rs3"><use href="#sep"/></svg>
  <button class="sk" aria-label="Sound"><svg><use href="#spk"/></svg></button><button class="rec" aria-label="Auto key"><svg><use href="#auto"/></svg></button><button class="rn" aria-label="Preferences"><svg><use href="#run"/></svg></button>
</div>

<footer class="cmd bar">
  <p class="help">e object(s). Shift+drag manipulator axis or plane handles to extrude components or clone objects. Ctrl+Shift+LMB+drag to constrain scaling to connected edges. Use D or INSERT to change the pivot posit</p>
  <div class="mel"><i class="vg"></i><label for="mel">MEL</label><input id="mel" class="dark"><i class="vg s"></i><output class="dark">// Result: 1</output><button aria-label="Script editor"><svg><use href="#script"/></svg></button></div>
  <div class="mini"><svg class="mlogo"><use href="#maya"/></svg><button aria-label="Restore"><svg viewBox="0 0 14 14"><path d="M1 4h9v9H1zM4 2h6q3 0 3 3v5"/></svg></button><button aria-label="Maximize"><svg viewBox="0 0 14 14"><path d="M2 2h10v10H2z"/></svg></button><button aria-label="Close"><svg viewBox="0 0 14 14"><path d="m1 1 12 12M13 1 1 13"/></svg></button></div>
</footer>
</div>
<script src="scene.js"></script>
</body>
</html>
```
FILE: styles.css
```css
*{box-sizing:border-box}
body{margin:0;background:#444;color:#ccc;font:10px/14px "Noto Sans","Open Sans",sans-serif}
button,input,select{font:inherit;color:inherit;margin:0;padding:0;border:0;background:none}
a{color:inherit;text-decoration:none}
h2,h3,p,ul,ol{margin:0;padding:0;font-size:inherit;list-style:none}
hr{margin:0;border:0}
svg{display:block;flex:none}
.sprite{display:none}
.app{display:flex;flex-direction:column;height:100vh;border-bottom:1px solid #3f5a8c}

.g{fill:#bdbdbd}.o{fill:#d99352}.t{fill:#4aa8b5}.dk{fill:#444}.o2{fill:#e07a43}
.s,.s2,.st,.so,.ds,.gm,.gm2,.sw,.dkw,.dk3{fill:none;stroke:#bdbdbd}
.st{stroke:#4aa8b5}.so{stroke:#d99352}.ds{stroke:#444}.sw{stroke:#e6e6e6;stroke-width:2}
.gm{stroke-width:3}.gm2,.w2,.s2{stroke-width:2}.w4{stroke-width:4}
.dkw,.dk3{stroke:#444;stroke-width:4}.dk3{stroke:#33444f}
.on .st{stroke:#5cc4d0}
.m{stroke:#777}.m2{fill:#8a8a8a}.wh{stroke:#ddd}.dkf{fill:#3c3c3c}
.dash{stroke-dasharray:4 2}.dash2{stroke-dasharray:2 1}.dash4{stroke-dasharray:5 3}
.ipr{font:bold 8px "Liberation Sans",sans-serif;fill:#333}
.svgt{font:bold 11px "Liberation Sans",sans-serif;fill:#333}
.zero{font:bold 10px "Liberation Sans",sans-serif;fill:#4aa8b5}
.mm{font:bold 17px "Liberation Sans",sans-serif;fill:#fff}
.ma{font:bold 7px "Liberation Sans",sans-serif;fill:#fff}
.va{font:bold 9px "Liberation Sans",sans-serif;fill:#fff}
.ont{font:bold 6px "Liberation Sans",sans-serif;fill:#234}
.scr{font:bold 11px "Liberation Mono",monospace;fill:#333}
.i16{width:16px;height:16px}.t9{width:9px;height:6px}
.on{background:#5285a6}

.bar{position:relative}
.bar::before{content:"";position:absolute;left:3px;top:4px;bottom:4px;width:4px;background:radial-gradient(#7a7a7a 1px,transparent 1px) 0 0/2px 3px}

.combo{position:relative;background:#5d5d5d;border-radius:2px;display:flex;align-items:center}
.combo select{appearance:none;width:100%;height:100%;padding-left:3px}
.combo svg{position:absolute;right:5px;width:9px;height:6px}
.combo::after{content:"";position:absolute;right:19px;top:0;bottom:0;width:1px;background:#444}
.field{border:1px solid #525252;border-radius:2px;background:#414141;text-align:left;padding-left:5px;height:20px;width:94px}
.dark{background:#2b2b2b;border-radius:2px;padding-left:5px;height:20px}

.menubar{display:flex;height:23px;align-items:center}
.home{margin-left:8px;width:27px}.home svg{width:15px;height:15px}
.menus{display:grid;grid-template-columns:31px 33px 45px 42px 48px 49px 59px 41px 62px 67px 78px 46px 54px 50px 28px 58px 43px 38px 47px auto;flex:1;justify-content:start}
.ws-label{margin:0 4px 3px 0}
.ws{width:180px;height:19px;align-self:start;margin-right:8px}
.lock{width:17px}.lock svg{width:11px;height:14px}

.status{display:flex;height:32px;align-items:center;padding:2px 2px 5px 13px;border-bottom:2px solid #393939}
.mode{width:92px;height:20px}
.slots{display:grid;grid-auto-flow:column;grid-auto-columns:1fr;align-items:center;justify-items:center}
.slots svg{width:18px;height:18px}
.slots button,.slots .on{display:flex;align-items:center;justify-content:center;width:100%;height:21px}
.slots .on{border-right:1px solid #444}
.s19{width:407px}.s13{width:278px}.s5{width:107px;margin-left:auto}
.tri{width:8px;height:5px;margin:0 4px;opacity:.7}
.sp{width:24px;height:18px}
.account{display:flex;align-items:center;width:188px;height:26px;background:#5d5d5d;color:#e6e6e6;padding-left:2px}
.account .name{width:106px;margin-left:3px;text-align:left}
.account .t9{margin-right:16px}.account .t9+.i16{margin-right:3px}

.shelf{display:flex;height:65px;padding:2px 2px 0 13px;border-bottom:2px solid #393939}
.shelfside{width:19px;margin-right:3px;background:#373737;display:flex;flex-direction:column;align-items:center;justify-content:space-between;padding:13px 0 9px;height:60px}
.shelfside svg{width:10px;height:10px}
.burger{width:9px;height:4px;border:solid #aaa;border-width:1px 0}
.shelfmain{flex:1;display:grid;grid-template-columns:1fr 11px;grid-template-rows:18px 1fr}
.tabs{grid-column:1/3;background:#373737;display:grid;grid-template-columns:58px 66px 97px 73px 77px 64px 77px 75px 38px 79px 62px 60px 58px 55px 106px 51px;gap:2px;padding:3px 0 0 1px}
.tabs button{background:#3b3b3b;border:1px solid #2e2e2e;border-bottom:0;border-radius:2px 2px 0 0;color:#999}
.tabs .cur{background:#444;color:#eee;border-color:#444}
.icons{display:grid;grid-auto-flow:column;grid-auto-columns:1fr;width:1438px;margin-left:4px;padding-top:7px;align-items:start;justify-items:center}
.icons svg{width:24px;height:24px}
.icons hr{width:2px;height:33px;margin-top:-3px;background:#999}
.shelfscroll{background:#2f2f2f;margin:4px 0 7px -5px;width:11px;display:flex;flex-direction:column;align-items:center;justify-content:space-between;padding:3px 0}
.shelfscroll svg{width:9px;height:5px}.shelfscroll i{width:9px;height:6px;border-radius:3px;background:#5d5d5d}
.up{transform:rotate(180deg)}.lt{transform:rotate(90deg)}.rt{transform:rotate(-90deg)}

.main{flex:1;min-height:0;display:flex;background:#444}
.toolbox{width:43px;display:flex;flex-direction:column;padding:3px 5px 6px 4px;border-right:1px solid #393939}
.toolbox::before{content:"";height:5px;width:36px;margin:0 0 4px -2px;background:radial-gradient(#7a7a7a 1px,transparent 1px) 0 0/3px 2px}
.tools{display:grid;grid-auto-rows:1fr}
.tools button{display:flex;align-items:center;justify-content:center;width:34px;min-height:34px}
.tools svg{width:27px;height:27px}
.t6{height:208px}.t1{margin-top:35px}.t4{height:138px}
.toolbox hr{height:2px;width:34px;margin:4px 0;background:#999}
.brand{width:28px;height:31px;margin:auto 0 0 3px}

.outliner{width:248px;display:flex;flex-direction:column;padding:0 1px 0 4px;background:#444;border-right:3px solid #393939}
.otab{margin:0 -1px 0 -4px;padding:3px 0 0 2px;background:#393939;height:18px}
.otab h2{background:#444;width:66px;height:15px;line-height:16px;text-align:center;font-weight:400;color:#eee;border-radius:2px 2px 0 0}
.omenus{display:grid;grid-template-columns:48px 41px auto;padding:4px 0 0 7px;height:25px;justify-content:start}
.search{display:flex;height:20px;align-items:center;padding-left:3px}
.sbox{display:flex;align-items:center;flex:1;margin:0 1px 0 6px;background:#2b2b2b;height:18px;border-radius:2px;padding:0 4px 0 3px}
.sbox input{flex:1;min-width:0;outline:0}.sbox input::placeholder{color:#888}
.otree{flex:1;display:flex;background:#373737;margin-top:1px}
.list{flex:1;display:grid;grid-template-rows:repeat(7,1fr);height:131px}
.list li{display:flex;align-items:center;padding-left:33px;color:#ccc}
.list svg{width:14px;height:8px;margin-right:4px}
.list .ms{width:18px;height:12px;margin:0 2px 0 -2px}.list .st16{width:16px;height:16px;margin:0 3px 0 -1px}
.list .dim{color:#6e6e6e}.list .alt{background:#2b2b2b}.list .sel{background:#5285a6;color:#fff}
.vbar{width:11px;display:flex;flex-direction:column;align-items:center;background:#323232;padding:2px 0 5px}
.vbar svg,.hbar svg{width:9px;height:5px}.vbar i{flex:1;width:9px;margin:4px 0;border-radius:4px;background:#5d5d5d}
.hbar{display:flex;align-items:center;background:#373737;height:11px;padding-right:12px}
.hbar i{flex:1;height:9px;margin:0 3px;border-radius:4px;background:#5d5d5d}
.grip{height:3px;width:81px;margin:1px auto 6px;background:repeating-linear-gradient(90deg,#777 0 1px,#444 1px 3px)}

.view{flex:1;min-width:0;display:flex;flex-direction:column;margin:4px 0 4px 4px;border:1px solid #808080}
.vmenus{display:grid;grid-template-columns:38px 54px 55px 41px 58px auto;justify-content:start;padding:2px 0 0 8px;height:19px}
.vtools{display:flex;align-items:center;height:19px;padding-bottom:1px}
.vtools .vs{width:9px;height:14px}.vtools .wd{width:10px}
.vtools button{width:18px;height:17px;display:flex;align-items:center;justify-content:center}
.vtools button svg{width:15px;height:15px}
.vtools input{width:35px;height:14px;background:#2b2b2b;border-radius:2px;padding-left:5px;margin:0 3px 0 1px}
.cs{width:186px;height:16px;margin-left:2px}
.canvas{flex:1;min-height:0;position:relative;background:#5d5d5d}
#scene{position:absolute;inset:0;width:100%;height:100%}
#grid path{fill:none;stroke:#454545}#grid .ax{stroke:#383838;stroke-width:2}
#ball .wire{fill:none;stroke:#43ffa4}
.cube text{font:bold 10px "Liberation Sans",sans-serif;fill:#6a6a6a}.cube .top{font-size:7px}
.axis path{stroke-width:2}.axis text{font:bold 9px "DejaVu Sans",sans-serif}
.persp{font:bold 9px "DejaVu Sans",sans-serif;fill:#eee;text-anchor:middle}

.channel{width:248px;display:flex;flex-direction:column;padding:4px 2px 3px 7px;border-left:2px solid #393939;margin-left:2px}
.chicons{display:flex;justify-content:flex-end;gap:6px;padding:1px 4px 0 0}.chicons svg{width:14px;height:14px}
.chmenus{display:grid;grid-template-columns:58px 33px 46px auto;justify-content:start;padding:7px 0 0 5px;height:27px}
.channel h3{padding-left:2px;height:14px;margin-top:1px;font-weight:700;font-size:9px}
.channel .chmenus+h3{height:15px;margin-top:1px}
.attrs{display:grid;grid-template-columns:159px 6px 7px 1fr;grid-auto-rows:15px;padding:0 5px 0 0}
.attrs label{text-align:right}.attrs i{grid-column:3;height:14px;background:#d0282d}.attrs .hot{background:#e67878}
.attrs input{min-width:0;height:14px;background:#2b2b2b;padding-left:2px;border-radius:0 2px 2px 0}.attrs .vis{background:#333}
.node{height:14px;margin:1px 5px 0 1px;padding-left:9px;font-weight:700;font-size:9px}.lit{background:#373737}
.channel .row{margin-top:1px}
.well{background:#2b2b2b}.w-a{height:213px;margin:15px 4px 0 1px}
.channel .grip{margin:4px auto 6px}
.layers{flex:1;display:flex;flex-direction:column;border:1px solid #393939;margin-left:-3px}
.ltabs{display:flex;gap:2px;background:#393939;height:17px;padding:1px 0 0 1px}
.ltabs button{width:50px;color:#888;border:1px solid #303030;border-bottom:0}.ltabs .cur{width:60px;background:#444;color:#eee;border-color:#444}
.lmenus{display:grid;grid-template-columns:44px 53px auto;justify-content:start;padding:4px 0 0 9px;height:23px}
.licons{display:flex;justify-content:flex-end;gap:8px;height:23px;padding:4px 8px 0 0}.licons svg{width:14px;height:10px}.licons .gap{margin-left:4px}
.w-b{flex:1;margin:0 4px 0 3px}
.lh{background:none;padding:0 5px;margin:3px 0 5px}.lh i{flex:none;width:145px}.lh .rt{margin-left:auto}
.side{width:17px;background:#393939;padding-top:2px;display:flex;flex-direction:column;gap:2px}
.side button{writing-mode:vertical-rl;width:17px;color:#888;border:1px solid #303030;background:#3b3b3b;line-height:15px}
.side .cur{background:#444;color:#eee;border-color:#444}
.side .a{height:153px}.side .b{height:101px}.side .c{height:160px;padding-bottom:50px;border-bottom:0;border-color:#393939;background:none}

.timeline{display:flex;height:47px;padding:0 2px 0 15px;border-bottom:2px solid #393939;align-items:center}
.ticks{flex:1;align-self:flex-start;display:grid;grid-template-columns:repeat(24,1fr);height:46px;padding:0 7px 0 8px;background:linear-gradient(#444 0 8px,#2b2b2b 8px 37px,#444 37px)}
.ticks li{position:relative;padding:8px 0 0 6px;color:#999;border-left:1px solid #222;background:linear-gradient(#1fa3dc,#1fa3dc) 0 38px/100% 2px no-repeat}
.ticks li::before{content:"";position:absolute;left:-1px;top:23px;width:1px;height:15px;background:#999}
.ticks .now{background:linear-gradient(#555 0 8px,#3c3c3c 8px 38px,#1fa3dc 38px 40px,#555 40px)}
.ticks b{display:block;font-weight:400;color:#fff}
.ticks .key::after{content:"";position:absolute;left:-1px;top:8px;width:3px;height:29px;background:repeating-linear-gradient(#c22 0 4px,#6a2020 4px 6px)}
.ticks .pre::after{left:-4px;width:2px}
.timeline input{width:47px;margin-left:8px}
.play{width:211px;margin-left:30px;display:grid;grid-template-columns:repeat(8,1fr);justify-items:center}
.play svg{width:16px;height:16px}.flip{transform:scaleX(-1)}

.range{display:flex;height:36px;align-items:center;padding:0 6px 0 16px;border-bottom:2px solid #393939}
.range>input{width:47px}
.range button svg{width:18px;height:18px}
.rslider{flex:1;display:flex;align-items:center;height:21px;margin:0 8px 0 7px;border:2px solid #2b2b2b;border-radius:2px;padding:0}
.rslider i{width:9px;height:17px;background:#999}.rslider span{margin:0 8px;color:#ddd}
.rslider em{flex:1;height:13px}.rslider em::after{content:"";display:block;width:5px;height:13px;margin:0 auto;background:radial-gradient(#7a7a7a 1px,transparent 1px) 0 0/3px 3px}
.rs,.rs2,.rs3{width:10px;height:18px}.range .rs{margin:0 14px}.range .rs+button{width:18px}
.rt1{width:8px;height:7px;margin:0 7px 0 9px}.rt2{width:8px;height:7px;margin:0 7px 0 13px}
.rf{width:95px}.rs2{margin:0 17px 0 15px}
.fps{width:89px;height:20px}
.lp{margin:0 8px 0 13px}.range .on{width:21px;height:20px;padding-left:1px}.bk{margin-left:6px}
.rs3{margin:0 15px 0 17px}.sk{width:18px}.rec{background:#d1343a;width:20px;height:20px;padding-left:1px;margin:0 8px}.rn{width:18px}

.cmd{display:flex;height:34px;align-items:center}
.help{width:1021px;padding-left:179px;overflow:hidden;white-space:nowrap;border-right:2px solid #393939;line-height:33px;color:#e0e0e0;font-size:9px}
.mel{flex:1;display:flex;align-items:center}
.vg{width:4px;height:24px;margin:0 8px 0 4px;background:radial-gradient(#777 1px,transparent 1px) 0 0/3px 3px}.vg.s{margin:0 1px;width:3px;height:12px}
.mel label{width:27px}.mel input{width:508px}.mel output{flex:1;line-height:20px;color:#ddd}
.mel button{margin:0 6px 0 9px}.mel button svg{width:19px;height:19px}
.mini{position:absolute;left:8px;top:2px;width:170px;height:31px;border-radius:7px;background:#f3f3f3;display:flex;align-items:center;padding-left:9px;box-shadow:0 0 3px #222}
.mini svg{width:14px;height:14px;fill:none;stroke:#777}.mini .mlogo{width:18px;height:20px;stroke:none}
.mini button+button{margin-left:40px}
```
FILE: scene.js
```js
const NS = 'http://www.w3.org/2000/svg';
const add = (id, d, cls) => {
  const p = document.createElementNS(NS, 'path');
  p.setAttribute('d', d);
  if (cls) p.setAttribute('class', cls);
  document.getElementById(id).appendChild(p);
  return p;
};

/* Ground plane: four known corners give the plane-to-screen mapping. */
const known = [
  [-12, -12, 591, 643], [12, -12, 1659, 566],
  [-12, 0, 477, 1056], [12, 0, 1886, 920]
];
function solve(rows) {
  const n = rows.length;
  for (let i = 0; i < n; i++) {
    let p = i;
    for (let r = i; r < n; r++) if (Math.abs(rows[r][i]) > Math.abs(rows[p][i])) p = r;
    [rows[i], rows[p]] = [rows[p], rows[i]];
    for (let r = 0; r < n; r++) {
      if (r === i) continue;
      const f = rows[r][i] / rows[i][i];
      for (let c = i; c <= n; c++) rows[r][c] -= f * rows[i][c];
    }
  }
  return rows.map((r, i) => r[n] / r[i]);
}
const eq = [];
known.forEach(([x, z, u, v]) => {
  eq.push([x, z, 1, 0, 0, 0, -u * x, -u * z, u]);
  eq.push([0, 0, 0, x, z, 1, -v * x, -v * z, v]);
});
const h = solve(eq);
const project = (x, z) => {
  const w = h[6] * x + h[7] * z + 1;
  return [(h[0] * x + h[1] * z + h[2]) / w, (h[3] * x + h[4] * z + h[5]) / w];
};
const line = (a, b, cls) => add('grid', 'M' + a.map(n => n.toFixed(1)) + 'L' + b.map(n => n.toFixed(1)), cls);
for (let i = -12; i <= 12; i++) {
  const cls = i === 0 ? 'ax' : '';
  line(project(i, -12), project(i, 8), cls);
  if (i <= 8) line(project(-12, i), project(12, i), cls);
}

/* Flattened sphere: 20 meridians and 20 parallels, front faces only. */
const cx = 1214, cy = 964, a = 60, b = 30;
const tilt = 46 * Math.PI / 180, turn = 6.5 * Math.PI / 180;
const body = document.createElementNS(NS, 'ellipse');
body.setAttribute('cx', cx); body.setAttribute('cy', cy);
body.setAttribute('rx', 60); body.setAttribute('ry', 48);
body.setAttribute('fill', 'url(#shade)');
document.getElementById('ball').appendChild(body);
const point = (lat, lon) => {
  const x = Math.cos(lat) * Math.sin(lon), y = Math.sin(lat), z = Math.cos(lat) * Math.cos(lon);
  const facing = y / b * Math.sin(tilt) + z / a * Math.cos(tilt);
  return { u: cx + a * x, v: cy - b * y * Math.cos(tilt) + a * z * Math.sin(tilt), front: facing > -0.001 };
};
const trace = pts => {
  let d = '', pen = false;
  pts.forEach(p => {
    if (p.front) d += (pen ? 'L' : 'M') + p.u.toFixed(1) + ' ' + p.v.toFixed(1);
    pen = p.front;
  });
  if (d) add('ball', d, 'wire');
};
for (let m = 0; m < 20; m++) {
  const pts = [];
  for (let k = 0; k <= 80; k++) pts.push(point(Math.PI / 2 - Math.PI * k / 80, turn + m * Math.PI / 10));
  trace(pts);
}
for (let p = 1; p < 20; p++) {
  const pts = [];
  for (let k = 0; k <= 160; k++) pts.push(point(Math.PI / 2 - Math.PI * p / 20, k * Math.PI / 80));
  trace(pts);
}
```
